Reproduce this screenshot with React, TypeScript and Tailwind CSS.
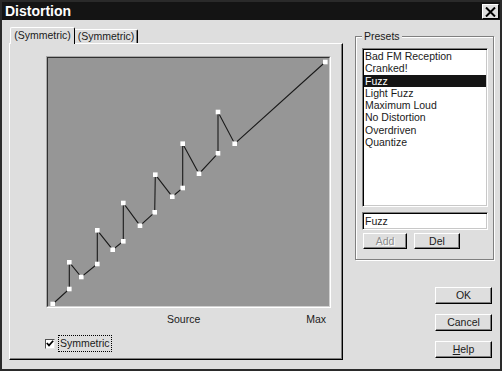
// Distortion dialog: curve editor with preset list
const PRESETS = [
  'Bad FM Reception',
  'Cranked!',
  'Fuzz',
  'Light Fuzz',
  'Maximum Loud',
  'No Distortion',
  'Overdriven',
  'Quantize',
];

const POINTS: [number, number][] = [
  [52.7, 305],
  [69.3, 290],
  [69.3, 263.3],
  [81.3, 278],
  [97.3, 265],
  [97.3, 231.3],
  [112.7, 250.7],
  [123.3, 242.3],
  [123.3, 204],
  [140, 226.7],
  [154.7, 213.3],
  [155.3, 175.7],
  [172.3, 197.7],
  [182.7, 189],
  [182.7, 144.7],
  [199, 174.7],
  [218, 154.3],
  [218, 113],
  [234.7, 144.7],
  [325.3, 63],
];

function Button({ children, className = '', disabled = false }: { children: React.ReactNode; className?: string; disabled?: boolean }) {
  return (
    <div
      className={`flex items-center justify-center border border-t-white border-l-white border-r-black border-b-black shadow-[inset_-1px_-1px_0_#808080] ${
        disabled ? 'text-[#8c8c8c] [text-shadow:1px_1px_0_#fff]' : 'text-[#1a1a1a]'
      } ${className}`}
    >
      {children}
    </div>
  );
}

function Curve() {
  const d = POINTS.map(([x, y], i) => `${i === 0 ? 'M' : 'L'}${x} ${y}`).join(' ');
  return (
    <svg viewBox="48 59 281 248" className="block w-full h-full">
      <path d={d} fill="none" stroke="#1a1a1a" strokeWidth="1.1" />
      {POINTS.map(([x, y], i) => (
        <rect key={i} x={x - 2.3} y={y - 2.3} width="4.6" height="4.6" fill="#fff" />
      ))}
    </svg>
  );
}

export default function App() {
  return (
    <div className="w-[502px] h-[371px] bg-[#dedede] border-2 border-[#2a2a2a] flex flex-col font-['Liberation_Sans',Arial,sans-serif] text-[10.5px] leading-[13px] text-[#1a1a1a] overflow-hidden">
      {/* title bar */}
      <div className="h-[18px] bg-[#141414] flex items-center justify-between pl-[3px] pr-px">
        <span className="text-white font-bold text-[14px] leading-[16px]">Distortion</span>
        <div className="w-[17px] h-[15px] mt-[1px] bg-[#dedede] border border-t-white border-l-white border-r-black border-b-black flex items-center justify-center">
          <svg width="11" height="10" viewBox="0 0 11 10">
            <path d="M1 0.5 L10 9.5 M10 0.5 L1 9.5" stroke="#000" strokeWidth="2" />
          </svg>
        </div>
      </div>

      <div className="flex-1 flex pl-[7px] pt-[8px]">
        {/* tab control */}
        <div className="w-[334px] flex flex-col">
          <div className="flex items-end h-[16px] -mb-px relative z-10">
            <div className="ml-px w-[65px] h-[17px] bg-[#dedede] border-l border-t border-r border-l-white border-t-white border-r-black rounded-t-[2px] flex items-center justify-center pb-[2px]">
              (Symmetric)
            </div>
            <div className="w-[63px] h-[14px] mb-px border-t border-r border-t-white border-r-black rounded-tr-[2px] shadow-[inset_-1px_0_0_#808080] flex items-center justify-center">
              (Symmetric)
            </div>
          </div>
          <div className="h-[317px] border border-l-white border-t-white border-r-black border-b-black shadow-[inset_-1px_-1px_0_#808080] flex flex-col">
            <div className="ml-[36px] mt-[12px] w-[285px] h-[252px] border border-t-[#a8a8a8] border-l-[#a8a8a8] border-r-white border-b-white">
              <div className="w-full h-full border border-t-[#303030] border-l-[#303030] border-r-[#d0d0d0] border-b-[#d0d0d0] bg-[#969696]">
                <Curve />
              </div>
            </div>
            <div className="ml-[36px] w-[285px] mt-[5px] flex">
              <span className="ml-[121px]">Source</span>
              <span className="ml-auto mr-[5px]">Max</span>
            </div>
            <div className="ml-[35px] mt-[9px] flex items-center gap-[3px]">
              <div className="w-[10px] h-[10px] bg-white border border-t-[#505050] border-l-[#505050] border-r-[#e8e8e8] border-b-[#e8e8e8] flex items-center justify-center">
                <svg width="8" height="7" viewBox="0 0 8 7">
                  <path d="M0.8 3 L3 5.4 L7.2 0.8" fill="none" stroke="#000" strokeWidth="1.7" />
                </svg>
              </div>
              <span className="border border-dotted border-black px-px py-px">Symmetric</span>
            </div>
          </div>
        </div>

        {/* right column */}
        <div className="ml-[12px] w-[139px] flex flex-col">
          <div className="relative mt-[8px] h-[224px] border border-[#808080] shadow-[inset_1px_1px_0_#fff,1px_1px_0_#fff] px-[6px] pt-[11px]">
            <span className="absolute -top-[7px] left-[6px] bg-[#dedede] px-[2px]">Presets</span>
            <div className="w-[126px] h-[159px] bg-white border border-t-[#808080] border-l-[#808080] border-r-white border-b-white shadow-[inset_1px_1px_0_#000,inset_-1px_-1px_0_#c8c8c8] p-px">
              {PRESETS.map((p) => (
                <div
                  key={p}
                  className={`h-[12.3px] leading-[12.3px] pl-[1px] whitespace-nowrap ${p === 'Fuzz' ? 'bg-[#141414] text-white' : ''}`}
                >
                  {p}
                </div>
              ))}
            </div>
            <div className="mt-[5px] w-[126px] h-[18px] bg-white border border-t-[#808080] border-l-[#808080] border-r-white border-b-white shadow-[inset_1px_1px_0_#000,inset_-1px_-1px_0_#c8c8c8] flex items-center pl-[2px]">
              Fuzz
            </div>
            <div className="mt-[3px] ml-px flex gap-[7px]">
              <Button className="w-[44px] h-[16px]" disabled>
                Add
              </Button>
              <Button className="w-[46px] h-[16px]">Del</Button>
            </div>
          </div>
          <div className="ml-[80px] mt-[27px] flex flex-col gap-[10px]">
            <Button className="w-[57px] h-[17px]">OK</Button>
            <Button className="w-[57px] h-[17px]">Cancel</Button>
            <Button className="w-[57px] h-[17px]">
              <span>
                <span className="underline">H</span>elp
              </span>
            </Button>
          </div>
        </div>
      </div>
    </div>
  );
}
